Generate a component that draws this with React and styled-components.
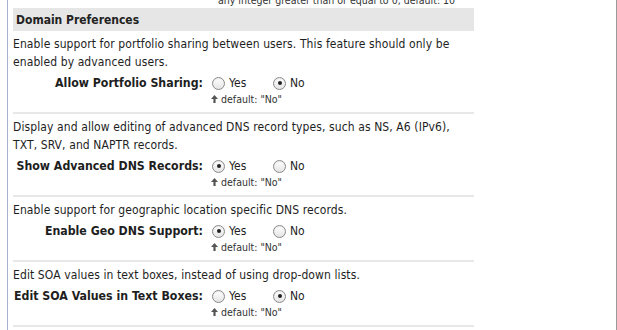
import React from "react";
import styled, { createGlobalStyle } from "styled-components";

const Global = createGlobalStyle`
  html, body { margin: 0; padding: 0; background: #ffffff; }
  body { font-family: "DejaVu Sans Condensed", "DejaVu Sans", Verdana, sans-serif; color: #1e1e1e; }
  #root { width: 617px; height: 330px; overflow: hidden; }
`;

const Page = styled.div`
  display: flex;
  width: 617px;
  height: 330px;
  background: #dde5f1;
`;

const Gutter = styled.div`
  width: 7px;
  flex: none;
  background: #ffffff;
`;

const Panel = styled.div`
  width: 603px;
  flex: none;
  background: #ffffff;
  border-left: 1px solid #a9b1d3;
  border-right: 1px solid #9a9a9a;
  padding-left: 5px;
  overflow: hidden;
`;

const Content = styled.div`
  width: 461px;
  margin-top: -7px;
`;

const Hint = styled.div`
  display: flex;
  align-items: center;
  gap: 3px;
  height: 14px;
  padding-left: ${(p) => p.$indent}px;
  font-size: 10.5px;
  color: #333;
  white-space: nowrap;
`;

const Header = styled.div`
  margin-top: 1px;
  height: 23px;
  display: flex;
  align-items: center;
  padding-left: 3px;
  background: #e6e6e6;
  font-weight: bold;
  font-size: 12px;
  color: #222;
`;

const Section = styled.div`
  padding-top: 4px;
  padding-bottom: 6px;
  border-bottom: 2px solid #e8e8e8;
`;

const Desc = styled.div`
  font-size: 12px;
  line-height: 18px;
  letter-spacing: 0.1px;
`;

const Row = styled.div`
  display: grid;
  grid-template-columns: 190px auto;
  align-items: center;
  margin-top: 3px;
  height: 18px;
`;

const Label = styled.div`
  text-align: right;
  font-weight: bold;
  font-size: 12.25px;
  white-space: nowrap;
`;

const Options = styled.div`
  display: flex;
  align-items: center;
  padding-left: 9px;
`;

const Option = styled.label`
  display: flex;
  align-items: center;
  gap: 4px;
  width: 61px;
  font-size: 12px;
`;

const Radio = styled.span`
  position: relative;
  width: 11px;
  height: 11px;
  border-radius: 50%;
  border: 1px solid #8a8a8a;
  background: linear-gradient(#ffffff, #e4e4e4);
  box-shadow: inset 0 1px 1px rgba(0,0,0,0.08);
  flex: none;
  &::after {
    content: "";
    display: ${(p) => (p.$checked ? "block" : "none")};
    position: absolute;
    left: 3.5px;
    top: 3.5px;
    width: 4px;
    height: 4px;
    border-radius: 50%;
    background: #222;
  }
`;

const Arrow = () => (
  <svg width="7" height="8" viewBox="0 0 7 8">
    <path d="M3.5 0 L7 4 L4.6 4 L4.6 8 L2.4 8 L2.4 4 L0 4 Z" fill="#555" />
  </svg>
);

const sections = [
  {
    desc: "Enable support for portfolio sharing between users. This feature should only be enabled by advanced users.",
    label: "Allow Portfolio Sharing:",
    yes: false,
  },
  {
    desc: "Display and allow editing of advanced DNS record types, such as NS, A6 (IPv6), TXT, SRV, and NAPTR records.",
    label: "Show Advanced DNS Records:",
    yes: true,
  },
  {
    desc: "Enable support for geographic location specific DNS records.",
    label: "Enable Geo DNS Support:",
    yes: true,
  },
  {
    desc: "Edit SOA values in text boxes, instead of using drop-down lists.",
    label: "Edit SOA Values in Text Boxes:",
    yes: false,
  },
];

export default function App() {
  return (
    <>
      <Global />
      <Page>
        <Gutter />
        <Panel>
          <Content>
            <Hint $indent={205}>any integer greater than or equal to 0, default: 10</Hint>
            <Header>Domain Preferences</Header>
            {sections.map((s) => (
              <Section key={s.label}>
                <Desc>{s.desc}</Desc>
                <Row>
                  <Label>{s.label}</Label>
                  <Options>
                    <Option>
                      <Radio $checked={s.yes} />
                      Yes
                    </Option>
                    <Option>
                      <Radio $checked={!s.yes} />
                      No
                    </Option>
                  </Options>
                </Row>
                <Hint $indent={198}>
                  <Arrow />
                  default: "No"
                </Hint>
              </Section>
            ))}
          </Content>
        </Panel>
      </Page>
    </>
  );
}
